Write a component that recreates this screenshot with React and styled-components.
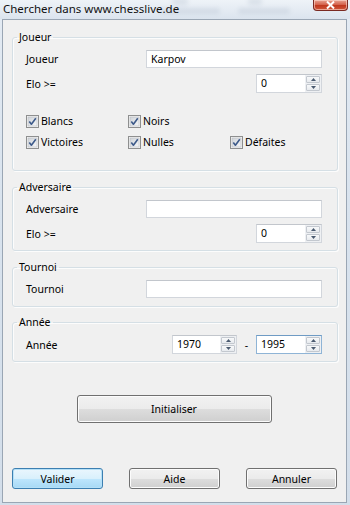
import React from "react";
import styled, { createGlobalStyle } from "styled-components";

const Global = createGlobalStyle`
  html, body { margin: 0; padding: 0; }
  body {
    width: 350px;
    height: 505px;
    overflow: hidden;
    font-family: "Noto Sans", "Open Sans", sans-serif;
    font-size: 10px;
    color: #000;
  }
`;

const Window = styled.div`
  width: 350px;
  height: 505px;
  display: flex;
  flex-direction: column;
  background: linear-gradient(180deg, #e4ebf3 0%, #d9e3ee 40%, #d3deea 100%);
  box-sizing: border-box;
`;

const TitleBar = styled.div`
  height: 19px;
  flex: 0 0 19px;
  display: flex;
  align-items: flex-start;
  position: relative;
  overflow: hidden;
  background: linear-gradient(180deg, #eef3f8 0%, #e3eaf2 60%, #dbe4ee 100%);
`;

const Title = styled.div`
  position: relative;
  z-index: 1;
  padding: 2px 0 0 3px;
  font-size: 11.5px;
  line-height: 14px;
  white-space: nowrap;
  color: #111;
`;

const Smudge = styled.div`
  position: absolute;
  top: ${(p) => p.$top}px;
  left: ${(p) => p.$left}px;
  width: ${(p) => p.$w}px;
  height: ${(p) => p.$h}px;
  background: #8a9ab0;
  opacity: 0.18;
  border-radius: 3px;
  filter: blur(2px);
`;

const CloseButton = styled.div`
  position: absolute;
  top: 0;
  right: 2px;
  width: 35px;
  height: 11px;
  border: 1px solid #7a2a22;
  border-top: none;
  border-radius: 0 0 4px 4px;
  background: linear-gradient(180deg, #e8a493 0%, #d5644e 45%, #c0391f 55%, #d0573b 100%);
  box-shadow: inset 0 0 0 1px rgba(255, 220, 210, 0.6);
  display: flex;
  align-items: center;
  justify-content: center;
  box-sizing: border-box;
`;

const Client = styled.div`
  flex: 1;
  margin: 0 3px 2px 2px;
  border: 1px solid #9aa6b4;
  background: #f0f0f0;
  display: flex;
  flex-direction: column;
  padding: 10px 8px 13px 9px;
  box-sizing: border-box;
  min-height: 0;
`;

const Group = styled.fieldset`
  margin: 0 0 ${(p) => p.$after}px 0;
  padding: 0;
  border: 1px solid #d5dfe5;
  border-radius: 3px;
  box-shadow: inset 1px 1px 0 #fcfcfc, 1px 1px 0 #fcfcfc;
  min-width: 0;
`;

const Legend = styled.legend`
  margin-left: 4px;
  padding: 0 2px;
  line-height: 14px;
  font-size: 10.5px;
`;

const GroupBody = styled.div`
  display: flex;
  flex-direction: column;
  gap: 6px;
  padding: 6px 15px ${(p) => p.$bottom}px 13px;
`;

const Row = styled.div`
  display: grid;
  grid-template-columns: 120px 1fr;
  align-items: center;
  height: 18px;
`;

const Label = styled.span`
  font-size: 10.5px;
  line-height: 14px;
`;

const TextBox = styled.div`
  height: 18px;
  box-sizing: border-box;
  background: #fff;
  border: 1px solid #d2d6dc;
  border-top-color: #c2c6cc;
  padding: 1px 4px;
  font-size: 10.5px;
  line-height: 14px;
`;

const SpinBox = styled.div`
  justify-self: end;
  width: ${(p) => p.$w}px;
  height: 19px;
  box-sizing: border-box;
  display: flex;
  background: #fff;
  border: 1px solid ${(p) => (p.$focus ? "#8fb4d6" : "#d2d6dc")};
  border-top-color: ${(p) => (p.$focus ? "#6f9bc4" : "#c2c6cc")};
`;

const SpinValue = styled.div`
  flex: 1;
  padding: 1px 4px;
  font-size: 10.5px;
  line-height: 15px;
`;

const SpinButtons = styled.div`
  width: 14px;
  display: flex;
  flex-direction: column;
  padding: 1px;
  gap: 1px;
  background: #eef0f3;
`;

const SpinButton = styled.div`
  flex: 1;
  border: 1px solid #c3c8cf;
  border-radius: 1px;
  background: linear-gradient(180deg, #f8f9fa 0%, #e7eaee 100%);
  display: flex;
  align-items: center;
  justify-content: center;
`;

const Arrow = ({ up }) => (
  <svg width="5" height="3" viewBox="0 0 5 3">
    <path d={up ? "M0 3 L2.5 0 L5 3 Z" : "M0 0 L2.5 3 L5 0 Z"} fill="#4a5a70" />
  </svg>
);

const Spin = ({ value, w = 66, focus }) => (
  <SpinBox $w={w} $focus={focus}>
    <SpinValue>{value}</SpinValue>
    <SpinButtons>
      <SpinButton>
        <Arrow up />
      </SpinButton>
      <SpinButton>
        <Arrow />
      </SpinButton>
    </SpinButtons>
  </SpinBox>
);

const Checks = styled.div`
  display: grid;
  grid-template-columns: 102px 102px auto;
  grid-auto-rows: 13px;
  row-gap: 8px;
  margin-top: 17px;
`;

const Check = styled.div`
  display: flex;
  align-items: center;
  gap: 2px;
  grid-column: ${(p) => p.$col};
  font-size: 10.5px;
  line-height: 13px;
`;

const CheckBoxIcon = () => (
  <svg width="13" height="13" viewBox="0 0 13 13">
    <defs>
      <linearGradient id="cbg" x1="0" y1="0" x2="1" y2="1">
        <stop offset="0" stopColor="#cfd3d8" />
        <stop offset="1" stopColor="#f6f7f8" />
      </linearGradient>
    </defs>
    <rect x="0.5" y="0.5" width="12" height="12" fill="#f4f4f4" stroke="#8e8f8f" />
    <rect x="2" y="2" width="9" height="9" fill="url(#cbg)" stroke="#b9bcc1" strokeWidth="0.6" />
    <path d="M3.3 6.4 L5.4 9.2 L9.8 3.2" fill="none" stroke="#3d5a8a" strokeWidth="1.6" strokeLinejoin="round" />
  </svg>
);

const YearRange = styled.div`
  justify-self: end;
  display: flex;
  align-items: center;
  gap: 0;
`;

const Dash = styled.span`
  width: 19px;
  text-align: center;
  font-size: 10.5px;
`;

const CenterRow = styled.div`
  display: flex;
  justify-content: center;
  margin-top: 33px;
  padding-right: 2px;
`;

const Button = styled.button`
  width: ${(p) => p.$w}px;
  height: ${(p) => p.$h}px;
  box-sizing: border-box;
  font-family: inherit;
  font-size: 10.5px;
  color: #000;
  border-radius: 3px;
  border: 1px solid ${(p) => (p.$default ? "#3c7fb1" : "#707070")};
  background: ${(p) =>
    p.$default
      ? "linear-gradient(180deg, #eaf6fd 0%, #d9f0fc 50%, #bee6fd 51%, #a7d9f5 100%)"
      : "linear-gradient(180deg, #f2f2f2 0%, #ebebeb 50%, #dddddd 51%, #cfcfcf 100%)"};
  box-shadow: inset 0 0 0 1px ${(p) => (p.$default ? "#b5e0f7" : "#fcfcfc")};
  padding: 0;
`;

const ButtonBar = styled.div`
  margin-top: auto;
  display: flex;
  justify-content: space-between;
  padding-right: 1px;
`;

export default function App() {
  return (
    <>
      <Global />
      <Window>
        <TitleBar>
          <Title>Chercher dans www.chesslive.de</Title>
          <Smudge $top={-2} $left={172} $w={16} $h={7} />
          <Smudge $top={8} $left={160} $w={60} $h={6} />
          <Smudge $top={-2} $left={248} $w={14} $h={7} />
          <Smudge $top={8} $left={238} $w={52} $h={6} />
          <CloseButton>
            <svg width="9" height="8" viewBox="0 0 9 8">
              <path d="M1 0.5 L8 7.5 M8 0.5 L1 7.5" stroke="#fff" strokeWidth="2" />
            </svg>
          </CloseButton>
        </TitleBar>
        <Client>
          <Group $after={9}>
            <Legend>Joueur</Legend>
            <GroupBody $bottom={21}>
              <Row>
                <Label>Joueur</Label>
                <TextBox>Karpov</TextBox>
              </Row>
              <Row>
                <Label>Elo &gt;=</Label>
                <Spin value="0" />
              </Row>
              <Checks>
                <Check $col={1}>
                  <CheckBoxIcon />
                  Blancs
                </Check>
                <Check $col={2}>
                  <CheckBoxIcon />
                  Noirs
                </Check>
                <Check $col={1}>
                  <CheckBoxIcon />
                  Victoires
                </Check>
                <Check $col={2}>
                  <CheckBoxIcon />
                  Nulles
                </Check>
                <Check $col={3}>
                  <CheckBoxIcon />
                  Défaites
                </Check>
              </Checks>
            </GroupBody>
          </Group>
          <Group $after={9}>
            <Legend>Adversaire</Legend>
            <GroupBody $bottom={8}>
              <Row>
                <Label>Adversaire</Label>
                <TextBox />
              </Row>
              <Row>
                <Label>Elo &gt;=</Label>
                <Spin value="0" />
              </Row>
            </GroupBody>
          </Group>
          <Group $after={8}>
            <Legend>Tournoi</Legend>
            <GroupBody $bottom={8}>
              <Row>
                <Label>Tournoi</Label>
                <TextBox />
              </Row>
            </GroupBody>
          </Group>
          <Group $after={0}>
            <Legend>Année</Legend>
            <GroupBody $bottom={8}>
              <Row>
                <Label>Année</Label>
                <YearRange>
                  <Spin value="1970" w={65} />
                  <Dash>-</Dash>
                  <Spin value="1995" w={66} focus />
                </YearRange>
              </Row>
            </GroupBody>
          </Group>
          <CenterRow>
            <Button $w={195} $h={28}>Initialiser</Button>
          </CenterRow>
          <ButtonBar>
            <Button $w={91} $h={21} $default>Valider</Button>
            <Button $w={91} $h={21}>Aide</Button>
            <Button $w={91} $h={21}>Annuler</Button>
          </ButtonBar>
        </Client>
      </Window>
    </>
  );
}
